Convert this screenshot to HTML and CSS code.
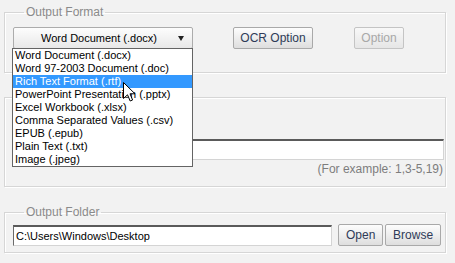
FILE: index.html
```html
<!DOCTYPE html>
<html lang="en">
<head>
  <meta charset="UTF-8" />
  <title>Output Settings</title>
  <link rel="stylesheet" href="styles.css">
</head>
<body>
  <fieldset class="group group-format">
    <legend>Output Format</legend>
    <div class="row">
      <div class="select">
        <span class="select-label">Word Document (.docx)</span>
        <span class="select-arrow"></span>
      </div>
      <button class="btn btn-ocr">OCR Option</button>
      <button class="btn btn-option" disabled>Option</button>
    </div>
  </fieldset>

  <fieldset class="group group-range">
    <input type="text" class="field field-range" />
    <div class="hint">(For example: 1,3-5,19)</div>
  </fieldset>

  <fieldset class="group group-folder">
    <legend>Output Folder</legend>
    <div class="row">
      <input type="text" class="field field-folder" value="C:\Users\Windows\Desktop" />
      <button class="btn btn-open">Open</button>
      <button class="btn btn-browse">Browse</button>
    </div>
  </fieldset>

  <ul class="dropdown">
    <li>Word Document (.docx)</li>
    <li>Word 97-2003 Document (.doc)</li>
    <li class="selected">Rich Text Format (.rtf)</li>
    <li>PowerPoint Presentation (.pptx)</li>
    <li>Excel Workbook (.xlsx)</li>
    <li>Comma Separated Values (.csv)</li>
    <li>EPUB (.epub)</li>
    <li>Plain Text (.txt)</li>
    <li>Image (.jpeg)</li>
  </ul>

  <svg class="cursor" width="13" height="20" viewBox="0 0 13 20">
    <path d="M0.5 0.5 L0.5 16.5 L4.5 12.8 L7.2 19 L9.6 18 L7 11.8 L12 11.8 Z" fill="#fff" stroke="#000" stroke-width="1" stroke-linejoin="miter"/>
  </svg>
</body>
</html>
```

FILE: styles.css
```css
:root {
  --bg: #f2f2f2;
  --etch: #d6d6d6;
  --legend: #8a8a8a;
  --btn-text: #2f3b58;
  --select: #3399ff;
}

html, body {
  margin: 0;
  padding: 0;
  background: var(--bg);
  font-family: "Liberation Sans", Arial, sans-serif;
}

body {
  position: relative;
  width: 455px;
  height: 263px;
  padding-top: 5px;
  box-sizing: border-box;
  overflow: hidden;
}

.group {
  margin: 0 9px 0 4px;
  padding: 0 7px;
  border: 1px solid var(--etch);
  box-shadow: inset 1px 1px 0 #fff, 1px 1px 0 #fff;
  min-width: 0;
}

.group legend {
  padding: 0 2px;
  margin-left: 12px;
  font-size: 12px;
  line-height: 14px;
  color: var(--legend);
}

.group-format {
  padding-top: 8px;
  padding-bottom: 23px;
}

.group-range {
  margin-top: 24px;
  padding-top: 41px;
  padding-right: 2px;
  padding-bottom: 10px;
}

.group-folder {
  margin-top: 18px;
  padding-top: 5px;
  padding-right: 4px;
  padding-bottom: 6px;
}

.row {
  display: flex;
  align-items: center;
}

.select {
  width: 180px;
  height: 22px;
  box-sizing: border-box;
  margin-left: 1px;
  border: 1px solid #acacac;
  border-radius: 2px;
  background: linear-gradient(#fdfdfd, #e8e8e8);
  display: flex;
  align-items: center;
  font-size: 11px;
  color: #000;
}

.select-label {
  flex: 1;
  text-align: center;
  padding-left: 6px;
}

.select-arrow {
  width: 0;
  height: 0;
  margin-right: 8px;
  border-left: 3.5px solid transparent;
  border-right: 3.5px solid transparent;
  border-top: 5px solid #222;
}

.btn {
  height: 22px;
  box-sizing: border-box;
  padding: 0;
  border: 1px solid #a9a9a9;
  border-radius: 2px;
  background: linear-gradient(#fdfdfd, #dedede);
  font-family: "Liberation Sans", Arial, sans-serif;
  font-size: 12px;
  color: var(--btn-text);
}

.btn:disabled {
  color: #a8a8a8;
  border-color: #c4c4c4;
  background: linear-gradient(#f8f8f8, #e6e6e6);
}

.btn-ocr {
  width: 80px;
  margin-left: 40px;
}

.btn-option {
  width: 50px;
  margin-left: 41px;
}

.field {
  box-sizing: border-box;
  margin: 0;
  background: #fff;
  border: 1px solid #d4d4d4;
  border-top: 2px solid #5a5a5a;
  font-family: "Liberation Sans", Arial, sans-serif;
  outline: none;
}

.field-range {
  display: block;
  width: 100%;
  height: 21px;
  margin-left: 1px;
}

.hint {
  margin-top: 2px;
  text-align: right;
  font-size: 12px;
  line-height: 14px;
  color: #7d7d7d;
}

.field-folder {
  width: 320px;
  height: 21px;
  margin-left: 1px;
  padding: 1px 2px 0;
  border-left: 1px solid #6a6a6a;
  font-size: 11px;
  color: #000;
}

.btn-open {
  width: 45px;
  margin-left: 6px;
}

.btn-browse {
  width: 56px;
  margin-left: 2px;
}

.dropdown {
  position: absolute;
  left: 12px;
  top: 48px;
  width: 181px;
  box-sizing: border-box;
  margin: 0;
  padding: 0;
  list-style: none;
  background: #fff;
  border: 1px solid #646464;
  font-size: 11px;
  line-height: 13px;
  color: #000;
}

.dropdown li {
  padding-left: 2px;
  white-space: nowrap;
}

.dropdown li.selected {
  background: var(--select);
  color: #fff;
}

.cursor {
  position: absolute;
  left: 123px;
  top: 82px;
}
```
